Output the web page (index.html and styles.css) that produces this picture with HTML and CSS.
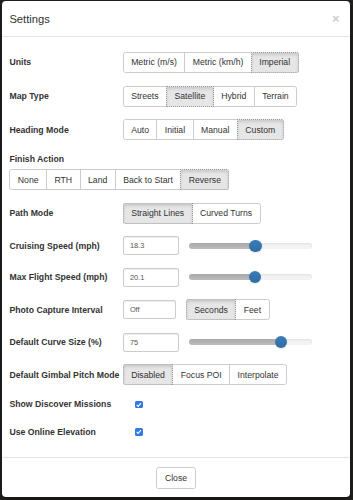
FILE: index.html
```html
<!DOCTYPE html>
<html lang="en">
<head>
    <meta charset="UTF-8">
    <meta name="viewport" content="width=device-width, initial-scale=1.0">
    <title>Settings</title>
    <link rel="stylesheet" href="styles.css">
</head>
<body>
    <div class="modal">
        <!-- header -->
        <div class="modal-header">
            <h4 class="modal-title">Settings</h4>
            <button class="close" type="button">&times;</button>
        </div>

        <!-- settings form -->
        <div class="modal-body">
            <div class="form-row">
                <label class="form-label">Units</label>
                <div class="btn-group">
                    <button class="btn">Metric (m/s)</button>
                    <button class="btn">Metric (km/h)</button>
                    <button class="btn active">Imperial</button>
                </div>
            </div>

            <div class="form-row">
                <label class="form-label">Map Type</label>
                <div class="btn-group">
                    <button class="btn">Streets</button>
                    <button class="btn active">Satellite</button>
                    <button class="btn">Hybrid</button>
                    <button class="btn">Terrain</button>
                </div>
            </div>

            <div class="form-row">
                <label class="form-label">Heading Mode</label>
                <div class="btn-group">
                    <button class="btn">Auto</button>
                    <button class="btn">Initial</button>
                    <button class="btn">Manual</button>
                    <button class="btn active">Custom</button>
                </div>
            </div>

            <div class="form-block">
                <label class="block-label">Finish Action</label>
                <div class="btn-group">
                    <button class="btn">None</button>
                    <button class="btn">RTH</button>
                    <button class="btn">Land</button>
                    <button class="btn">Back to Start</button>
                    <button class="btn active">Reverse</button>
                </div>
            </div>

            <div class="form-row">
                <label class="form-label">Path Mode</label>
                <div class="btn-group">
                    <button class="btn active">Straight Lines</button>
                    <button class="btn">Curved Turns</button>
                </div>
            </div>

            <div class="form-row">
                <label class="form-label">Cruising Speed (mph)</label>
                <input class="form-input" type="text" value="18.3">
                <div class="slider">
                    <div class="slider-fill" style="width: 54.3%"></div>
                    <div class="slider-handle"></div>
                </div>
            </div>

            <div class="form-row">
                <label class="form-label">Max Flight Speed (mph)</label>
                <input class="form-input" type="text" value="20.1">
                <div class="slider">
                    <div class="slider-fill" style="width: 53.8%"></div>
                    <div class="slider-handle"></div>
                </div>
            </div>

            <div class="form-row">
                <label class="form-label">Photo Capture Interval</label>
                <input class="form-input narrow" type="text" value="Off">
                <div class="btn-group side">
                    <button class="btn active">Seconds</button>
                    <button class="btn">Feet</button>
                </div>
            </div>

            <div class="form-row">
                <label class="form-label">Default Curve Size (%)</label>
                <input class="form-input" type="text" value="75">
                <div class="slider">
                    <div class="slider-fill" style="width: 75%"></div>
                    <div class="slider-handle"></div>
                </div>
            </div>

            <div class="form-row">
                <label class="form-label">Default Gimbal Pitch Mode</label>
                <div class="btn-group">
                    <button class="btn active">Disabled</button>
                    <button class="btn">Focus POI</button>
                    <button class="btn">Interpolate</button>
                </div>
            </div>

            <div class="form-row check-row">
                <label class="form-label">Show Discover Missions</label>
                <span class="check-box">
                    <svg viewBox="0 0 8 8" width="8" height="8"><path d="M1.8 4.1 L3.3 5.6 L6.3 2.3" fill="none" stroke="#fff" stroke-width="1.2"/></svg>
                </span>
            </div>

            <div class="form-row check-row">
                <label class="form-label">Use Online Elevation</label>
                <span class="check-box">
                    <svg viewBox="0 0 8 8" width="8" height="8"><path d="M1.8 4.1 L3.3 5.6 L6.3 2.3" fill="none" stroke="#fff" stroke-width="1.2"/></svg>
                </span>
            </div>
        </div>

        <!-- footer -->
        <div class="modal-footer">
            <button class="btn close-btn" type="button">Close</button>
        </div>
    </div>
</body>
</html>
```

FILE: styles.css
```css
* {
    margin: 0;
    padding: 0;
    box-sizing: border-box;
}

body {
    font-family: "Liberation Sans", Arial, Helvetica, sans-serif;
    background-color: #24221f;
    color: #333;
    height: 500px;
    overflow: hidden;
    padding: 1px 3px 3px 2px;
}

/* 弹窗 */
.modal {
    background: #fff;
    border-radius: 4px;
    box-shadow: 0 3px 9px rgba(0, 0, 0, 0.5);
    overflow: hidden;
}

.modal-header {
    display: flex;
    justify-content: space-between;
    align-items: center;
    padding: 9.5px 10.5px 9.5px 7.4px;
    border-bottom: 1px solid #e5e5e5;
}

.modal-title {
    font-size: 11.2px;
    line-height: 16px;
    font-weight: normal;
    color: #333;
}

.close {
    background: none;
    border: 0;
    font-family: inherit;
    font-size: 13px;
    font-weight: bold;
    line-height: 1;
    color: #000;
    opacity: 0.2;
    text-shadow: 0 1px 0 #fff;
    cursor: pointer;
}

.modal-body {
    padding: 15px 7.4px 18.7px;
}

/* 表单行 */
.form-row {
    display: flex;
    align-items: center;
    margin-bottom: 12.4px;
}

.form-label {
    width: 113.3px;
    flex-shrink: 0;
    font-size: 8.7px;
    line-height: 12.4px;
    font-weight: bold;
    white-space: nowrap;
}

.form-block {
    margin-bottom: 12.4px;
}

.block-label {
    display: block;
    font-size: 8.7px;
    line-height: 12.4px;
    font-weight: bold;
    margin-bottom: 4.1px;
}

.check-row {
    height: 13.2px;
    margin-bottom: 14.3px;
}

.check-row:last-child {
    margin-bottom: 0;
}

/* 按钮 */
.btn {
    position: relative;
    font-family: inherit;
    font-size: 8.68px;
    line-height: 12.4px;
    padding: 3.4px 7.44px;
    color: #333;
    background: #fff;
    border: 1px solid #ccc;
    white-space: nowrap;
    cursor: pointer;
}

.btn-group {
    display: flex;
}

.btn-group.side {
    margin-left: 10px;
}

.btn-group .btn {
    margin-left: -1px;
}

.btn-group .btn:first-child {
    margin-left: 0;
    border-radius: 2.5px 0 0 2.5px;
}

.btn-group .btn:last-child {
    border-radius: 0 2.5px 2.5px 0;
}

.btn.active {
    z-index: 2;
    background: #e6e6e6;
    border-style: dotted;
    border-color: #999;
    box-shadow: inset 0 2px 3px rgba(0, 0, 0, 0.125);
}

/* 输入框 */
.form-input {
    width: 56px;
    height: 19px;
    padding: 0 6.2px;
    font-family: inherit;
    font-size: 7.4px;
    color: #555;
    border: 1px solid #ccc;
    border-radius: 2px;
    box-shadow: inset 0 1px 1px rgba(0, 0, 0, 0.075);
}

.form-input.narrow {
    width: 53px;
}

/* 滑块 */
.slider {
    display: flex;
    align-items: center;
    margin-left: 10px;
    width: 123.3px;
    height: 6px;
    border-radius: 3px;
    background: #f3f3f3;
    box-shadow: inset 0 1px 2px rgba(0, 0, 0, 0.08);
}

.slider-fill {
    height: 100%;
    border-radius: 3px 0 0 3px;
    background: linear-gradient(#a8a8a8, #bdbdbd);
}

.slider-handle {
    flex-shrink: 0;
    width: 12.4px;
    height: 12.4px;
    margin: 0 -6.2px;
    border-radius: 50%;
    background: linear-gradient(#3a7dbb, #2e6da4);
    box-shadow: 0 1px 2px rgba(0, 0, 0, 0.1);
}

/* 复选框 */
.check-box {
    display: flex;
    align-items: center;
    justify-content: center;
    margin-left: 12.6px;
    width: 7.6px;
    height: 7.6px;
    border-radius: 1.5px;
    background: #3478e5;
}

.check-box svg {
    width: 7.6px;
    height: 7.6px;
}

/* 底部 */
.modal-footer {
    display: flex;
    justify-content: center;
    padding: 9.3px 7.4px 8.3px;
    border-top: 1px solid #e5e5e5;
}

.close-btn {
    border-radius: 2.5px;
}
```
